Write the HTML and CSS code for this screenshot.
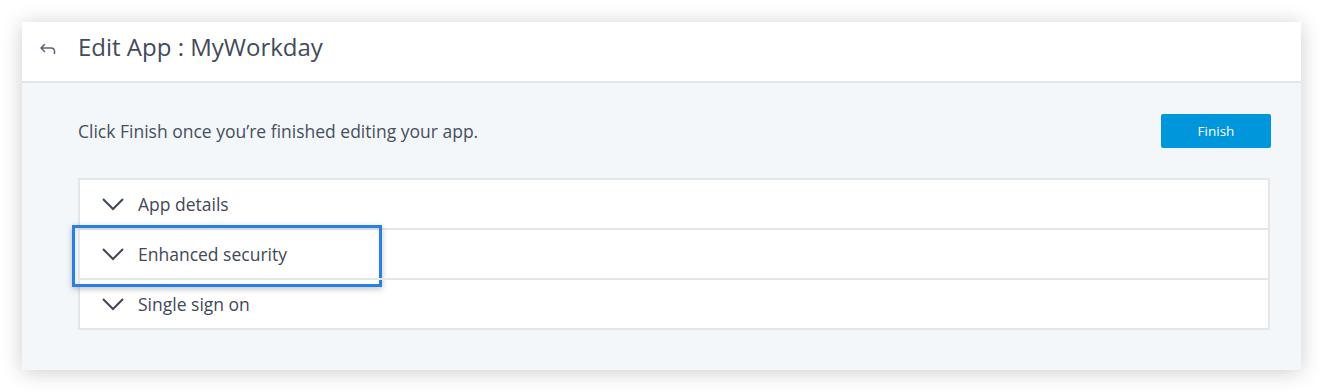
FILE: index.html
```html
<!DOCTYPE html>
<html lang="en">
<head>
    <meta charset="UTF-8">
    <meta name="viewport" content="width=device-width, initial-scale=1.0">
    <title>Edit App : MyWorkday</title>
    <link rel="stylesheet" href="styles.css">
</head>
<body>
    <div class="panel">
        <header class="panel-header">
            <button class="back" type="button" aria-label="Back">
                <svg width="16" height="14" viewBox="0 0 16 14">
                    <path d="M4.5 2.5 L1 6 L4.5 9.5 M1 6 H11 Q14.5 6 14.5 9.5 V11.5" fill="none" stroke="#5b6473" stroke-width="1.5" stroke-linecap="round" stroke-linejoin="round"/>
                </svg>
            </button>
            <h1>Edit App : MyWorkday</h1>
        </header>

        <div class="panel-body">
            <div class="intro">
                <p>Click Finish once you’re finished editing your app.</p>
                <button class="finish" type="button">Finish</button>
            </div>

            <div class="accordion">
                <div class="section">
                    <svg class="chev" width="22" height="13" viewBox="0 0 22 13"><path d="M1 1 L11 11 L21 1" fill="none" stroke="#3e4757" stroke-width="2"/></svg>
                    <span>App details</span>
                </div>
                <div class="section">
                    <svg class="chev" width="22" height="13" viewBox="0 0 22 13"><path d="M1 1 L11 11 L21 1" fill="none" stroke="#3e4757" stroke-width="2"/></svg>
                    <span>Enhanced security</span>
                    <div class="highlight"></div>
                </div>
                <div class="section">
                    <svg class="chev" width="22" height="13" viewBox="0 0 22 13"><path d="M1 1 L11 11 L21 1" fill="none" stroke="#3e4757" stroke-width="2"/></svg>
                    <span>Single sign on</span>
                </div>
            </div>
        </div>
    </div>
</body>
</html>
```

FILE: styles.css
```css
body {
    font-family: 'Open Sans', 'Noto Sans', sans-serif;
    background-color: #FFFFFF;
    color: #3c4656;
    margin: 0;
    padding: 22px;
}
.panel {
    background-color: #F4F7FA; /* fondo grigio chiaro */
    box-shadow: 0 2px 20px rgba(0, 0, 0, 0.2);
}
.panel-header {
    display: flex;
    align-items: center;
    height: 59px;
    background-color: #FFFFFF;
    border-bottom: 2px solid #E3E6E9;
}
.back {
    display: flex;
    width: 56px;
    padding: 0 0 6px 18px;
    background: none;
    border: none;
    cursor: pointer;
}
h1 {
    margin: 0 0 11px 0;
    font-size: 24px;
    font-weight: 400;
    color: #414b5a;
}
.panel-body {
    padding: 31px 30px 40px 56px;
}
.intro {
    display: flex;
    align-items: center;
    justify-content: space-between;
    margin-bottom: 30px;
}
.intro p {
    margin: 0;
    font-size: 17.5px;
    color: #464f5d;
}
.finish {
    width: 110px;
    height: 34px;
    background-color: #0096DC;
    color: #FFFFFF;
    border: none;
    border-radius: 2px;
    font-family: inherit;
    font-size: 13.5px;
    cursor: pointer;
}
.accordion {
    background-color: #FFFFFF;
    border: 2px solid #E4E7EA;
    margin-right: 1px;
}
.section {
    position: relative;
    display: flex;
    align-items: center;
    height: 48px;
    padding-left: 22px;
    font-size: 17.5px;
    color: #3f4858;
}
.section + .section {
    border-top: 2px solid #E4E7EA;
}
.chev {
    margin-right: 14px;
}
.highlight {
    position: absolute;
    left: -8px;
    top: -5px;
    width: 304px;
    height: 56px;
    border: 3px solid #2A7FE0;
    box-shadow: 0 2px 6px rgba(0, 0, 0, 0.25), inset 0 1px 3px rgba(0, 0, 0, 0.12);
}
```
